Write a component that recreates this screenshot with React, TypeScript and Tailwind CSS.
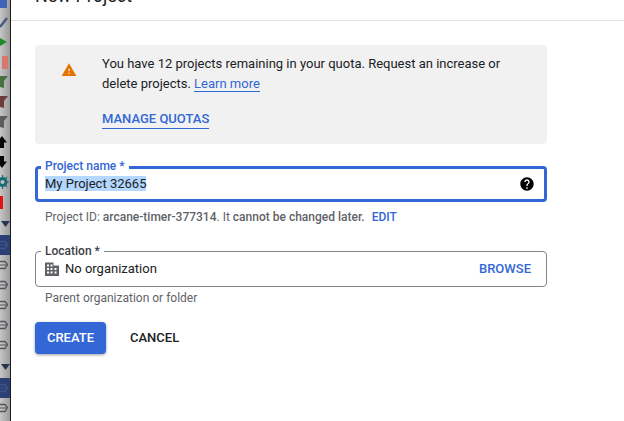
const blue = "text-[#3367d6]";

function Funnel({ color }: { color: string }) {
  return (
    <svg width="10" height="14" viewBox="0 0 10 14">
      <path d="M-3 1H8L4 6v7L0 12V6z" fill={color} />
    </svg>
  );
}

function Row({ selected }: { selected?: boolean }) {
  const stroke = selected ? "#3e5488" : "#50545c";
  return (
    <div className={`flex h-5 shrink-0 items-center ${selected ? "bg-[#2b3f73]" : ""}`}>
      <svg width="10" height="12" viewBox="0 0 10 12">
        <path d="M-1 2.5h6l2.5 3L5 9.5H-1" fill="none" stroke={stroke} strokeWidth="1.3" />
        <path d="M-1 6h8" stroke={stroke} strokeWidth="1" />
      </svg>
    </div>
  );
}

function Caret() {
  return (
    <div className="flex h-[23px] shrink-0 items-center justify-end">
      <svg width="9" height="6" viewBox="0 0 9 6">
        <path d="M0 0h9L4.5 6z" fill="#27364f" />
      </svg>
    </div>
  );
}

function Slot({ children }: { children: React.ReactNode }) {
  return <div className="flex h-5 shrink-0 items-center overflow-hidden">{children}</div>;
}

function Toolbar() {
  return (
    <aside className="flex h-full w-[11px] shrink-0 flex-col overflow-hidden border-r border-r-[#1c1c1c] bg-gradient-to-r from-[#c6c6c6] to-[#9a9a9a]">
      <div className="-mt-2 flex flex-col">
        <Slot>
          <div className="h-3 w-[7px] bg-[#3f63b5]" />
        </Slot>
        <Slot>
          <svg width="10" height="12" viewBox="0 0 10 12">
            <path d="M0 11L7 2" stroke="#47597d" strokeWidth="2.4" />
          </svg>
        </Slot>
        <Slot>
          <svg width="10" height="10" viewBox="0 0 10 10">
            <path d="M0 1l7 4-7 4z" fill="#1f8a2c" />
          </svg>
        </Slot>
        <Slot>
          <div className="ml-0.5 h-[13px] w-1.5 bg-[#d8776d]" />
        </Slot>
        <Slot>
          <Funnel color="#47703f" />
        </Slot>
        <Slot>
          <Funnel color="#6e3b3b" />
        </Slot>
        <Slot>
          <Funnel color="#5c5c5c" />
        </Slot>
        <Slot>
          <svg width="10" height="14" viewBox="0 0 10 14">
            <path d="M-3 7.5L2 1l5 6.5H4V13H0V7.5z" fill="#050505" />
          </svg>
        </Slot>
        <Slot>
          <svg width="10" height="14" viewBox="0 0 10 14">
            <path d="M-3 6.5L2 13l5-6.5H4V1H0v5.5z" fill="#050505" />
          </svg>
        </Slot>
        <Slot>
          <svg width="10" height="14" viewBox="0 0 10 14">
            <circle cx="2.5" cy="7" r="3.5" fill="none" stroke="#176b73" strokeWidth="3" />
            <path d="M2.5 0v14M-4 7h13M-2 2l9 10M7 2l-9 10" stroke="#176b73" strokeWidth="1.2" />
            <circle cx="2.5" cy="7" r="2" fill="#bdbdbd" />
          </svg>
        </Slot>
        <Slot>
          <div className="h-[13px] w-[3px] bg-[#e11414]" />
        </Slot>
        <Caret />
        <Row selected />
        <Row />
        <Row />
        <Row />
        <Row />
        <Row />
        <Caret />
        <Row selected />
        <Row />
      </div>
    </aside>
  );
}

export default function App() {
  return (
    <div className="flex h-[421px] w-[624px] overflow-hidden bg-white font-['Roboto',sans-serif] text-[13px] text-[#202124]">
      <Toolbar />
      <main className="min-w-0 flex-1">
        <header className="h-[21px] overflow-hidden border-b border-b-[#e0e0e0] pl-6">
          <h1 className="-mt-4 text-[18px] leading-[24px] font-normal">New Project</h1>
        </header>

        <div className="box-content w-[512px] pt-6 pl-6">
          <section className="flex h-[99px] rounded bg-[#f1f1f1]">
            <div className="flex w-[67px] shrink-0 justify-center pt-[17px]">
              <svg width="16" height="16" viewBox="0 0 24 24">
                <path d="M1 21h22L12 2 1 21zm12-3h-2v-2h2v2zm0-4h-2v-4h2v4z" fill="#e37400" />
              </svg>
            </div>
            <div className="pt-[9px] leading-5">
              <p className="w-[420px]">
                You have 12 projects remaining in your quota. Request an increase or delete projects.{" "}
                <a className={`${blue} border-b border-b-[#3367d6]`}>Learn more</a>
              </p>
              <a className={`${blue} mt-[15px] inline-block border-b border-b-[#3367d6] leading-[19px] font-medium`}>
                MANAGE QUOTAS
              </a>
            </div>
          </section>

          <div className="relative mt-[22px] flex h-[36px] items-center rounded border-[3px] border-[#3367d6] pr-[9px] pl-[7px]">
            <span className={`absolute -top-[11px] left-[3px] bg-white px-1 text-[12px] leading-4 font-medium ${blue}`}>
              Project name *
            </span>
            <span className="flex-1 leading-[20px]">
              <span className="bg-[#b3d7ff] text-[#202124]">My Project 32665</span>
            </span>
            <svg width="16" height="16" viewBox="0 0 24 24">
              <path
                d="M12 2C6.48 2 2 6.48 2 12s4.48 10 10 10 10-4.48 10-10S17.52 2 12 2zm1 17h-2v-2h2v2zm2.07-7.75l-.9.92C13.45 12.9 13 13.5 13 15h-2v-.5c0-1.1.45-2.1 1.17-2.83l1.24-1.26c.37-.36.59-.86.59-1.41 0-1.1-.9-2-2-2s-2 .9-2 2H8c0-2.21 1.79-4 4-4s4 1.79 4 4c0 .88-.36 1.68-.93 2.25z"
                fill="#000"
              />
            </svg>
          </div>
          <p className="mt-[7px] pl-2.5 text-[12px] leading-4 text-[#5f6368]">
            Project ID: <span className="font-medium">arcane-timer-377314</span>. It{" "}
            <span className="font-medium">cannot be changed later.</span>
            <a className={`${blue} ml-[7px] font-medium`}>EDIT</a>
          </p>

          <div className="relative mt-[26px] flex h-[36px] items-center rounded border border-[#80868b] pr-[15px] pl-[9px]">
            <span className="absolute -top-[9px] left-[5px] bg-white px-1 text-[12px] leading-4 font-medium text-[#3c4043]">
              Location *
            </span>
            <svg width="14" height="14" viewBox="0 0 14 14">
              <path
                fillRule="evenodd"
                d="M0 0.5h8.5v3H14V14H0zM2 2.5v2h2v-2zM5.5 2.5v2h2v-2zM2 6v2h2V6zM5.5 6v2h2V6zM9.5 6v2h2V6zM2 9.5v2h2v-2zM5.5 9.5v2h2v-2zM9.5 9.5v2h2v-2z"
                fill="#5f6368"
              />
            </svg>
            <span className="ml-1.5 flex-1">No organization</span>
            <a className={`${blue} font-medium`}>BROWSE</a>
          </div>
          <p className="mt-[3px] pl-2.5 text-[12px] leading-4 text-[#5f6368]">Parent organization or folder</p>

          <div className="mt-4 flex items-center">
            <button className="h-8 w-[71px] rounded bg-[#3367d6] text-[13px] font-medium text-white shadow-[0_1px_3px_rgba(60,64,67,0.5)]">
              CREATE
            </button>
            <button className="ml-6 text-[13px] font-medium text-[#202124]">CANCEL</button>
          </div>
        </div>
      </main>
    </div>
  );
}
